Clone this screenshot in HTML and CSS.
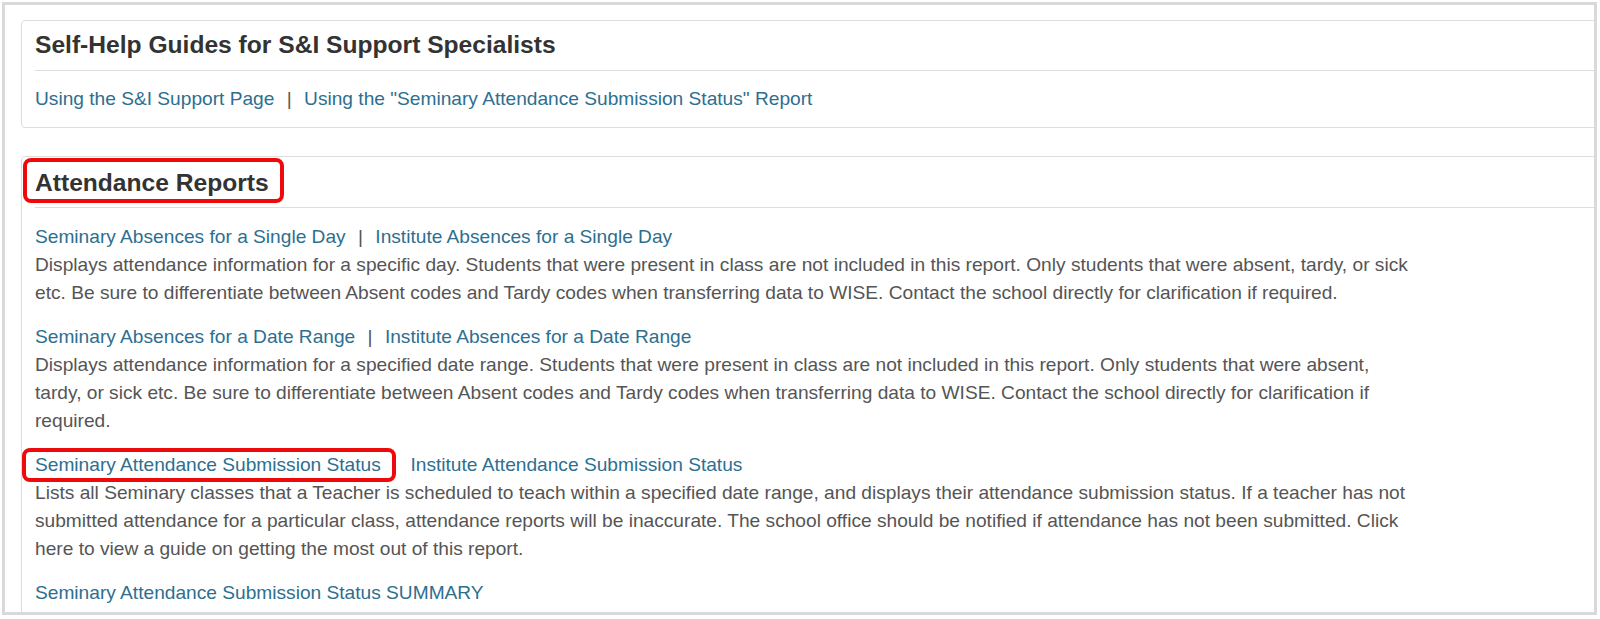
FILE: index.html
```html
<!DOCTYPE html>
<html lang="en">
<head>
<meta charset="utf-8">
<title>S&amp;I Support</title>
<link rel="stylesheet" href="styles.css">
</head>
<body>
<div class="frame">
  <section class="panel panel-guides">
    <h2 class="panel-title">Self-Help Guides for S&amp;I Support Specialists</h2>
    <div class="panel-body">
      <div class="links"><a href="#">Using the S&amp;I Support Page</a> <span class="sep">|</span> <a href="#">Using the "Seminary Attendance Submission Status" Report</a></div>
    </div>
  </section>

  <section class="panel panel-reports">
    <h2 class="panel-title"><span class="mark mark-title">Attendance Reports</span></h2>
    <div class="panel-body">
      <div class="report">
        <div class="links"><a href="#">Seminary Absences for a Single Day</a> <span class="sep">|</span> <a href="#">Institute Absences for a Single Day</a></div>
        <p class="desc">Displays attendance information for a specific day. Students that were present in class are not included in this report. Only students that were absent, tardy, or sick etc. Be sure to differentiate between Absent codes and Tardy codes when transferring data to WISE. Contact the school directly for clarification if required.</p>
      </div>
      <div class="report">
        <div class="links"><a href="#">Seminary Absences for a Date Range</a> <span class="sep">|</span> <a href="#">Institute Absences for a Date Range</a></div>
        <p class="desc">Displays attendance information for a specified date range. Students that were present in class are not included in this report. Only students that were absent, tardy, or sick etc. Be sure to differentiate between Absent codes and Tardy codes when transferring data to WISE. Contact the school directly for clarification if required.</p>
      </div>
      <div class="report">
        <div class="links"><a href="#" class="mark mark-link">Seminary Attendance Submission Status</a> <span class="sep sep-covered">|</span> <a href="#">Institute Attendance Submission Status</a></div>
        <p class="desc">Lists all Seminary classes that a Teacher is scheduled to teach within a specified date range, and displays their attendance submission status. If a teacher has not submitted attendance for a particular class, attendance reports will be inaccurate. The school office should be notified if attendance has not been submitted. Click here to view a guide on getting the most out of this report.</p>
      </div>
      <div class="report">
        <div class="links"><a href="#">Seminary Attendance Submission Status SUMMARY</a></div>
      </div>
    </div>
  </section>
</div>
</body>
</html>
```

FILE: styles.css
```css
html, body {
  margin: 0;
  padding: 0;
  background: #ffffff;
}

body {
  font-family: "Liberation Sans", Arial, sans-serif;
  color: #555555;
}

.frame {
  box-sizing: border-box;
  margin: 2px 0 0 2px;
  width: 1595px;
  height: 613px;
  border: 3px solid #d9d9d9;
  overflow: hidden;
  background: #ffffff;
  padding: 15px 0 0 16px;
}

.panel {
  box-sizing: border-box;
  width: 1600px;
  border: 1px solid #dddddd;
  border-radius: 4px;
  padding: 0 0 0 13px;
  background: #ffffff;
}

.panel-guides {
  padding-bottom: 14px;
}

.panel-reports {
  margin-top: 28px;
  padding-bottom: 60px;
}

.panel-title {
  margin: 0;
  padding: 10px 0 11px 0;
  font-size: 24.6px;
  line-height: 28px;
  font-weight: bold;
  color: #333333;
  border-bottom: 1px solid #dddddd;
}

.panel-reports .panel-title {
  padding-top: 12px;
  padding-bottom: 10px;
}

.panel-body {
  padding-top: 14px;
  font-size: 19.15px;
  line-height: 28px;
}

.panel-reports .panel-body {
  padding-top: 15px;
}

.links {
  white-space: nowrap;
}

a {
  color: #2d6f8f;
  text-decoration: none;
}

.sep {
  color: #555555;
  margin: 0 7px;
}

.sep-covered {
  visibility: hidden;
}

.report {
  margin-bottom: 16px;
}

.desc {
  margin: 0;
  max-width: 1380px;
}

.mark {
  position: relative;
  display: inline-block;
}

.mark::after {
  content: "";
  position: absolute;
  border: 4px solid #ee0a0a;
  border-radius: 8px;
  pointer-events: none;
}

.mark-title::after {
  top: -11px;
  bottom: -6px;
  left: -12px;
  right: -15px;
}

.mark-link::after {
  top: -3px;
  bottom: -3px;
  left: -13px;
  right: -15px;
}
```
